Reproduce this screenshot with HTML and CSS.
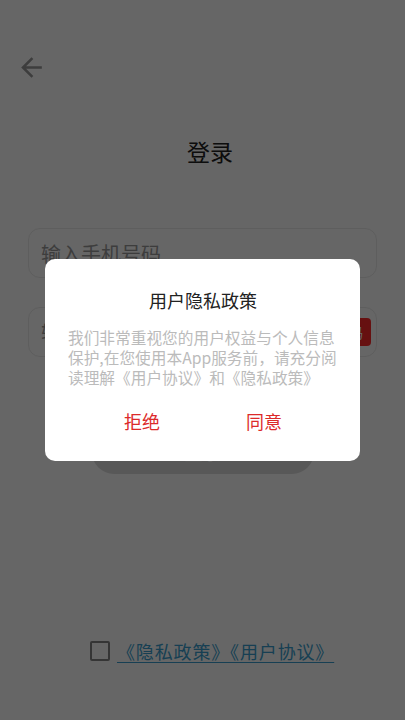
FILE: index.html
```html
<!DOCTYPE html>
<html lang="zh-CN">
<head>
  <meta charset="utf-8">
  <meta name="viewport" content="width=device-width, initial-scale=1">
  <title>登录</title>
  <link rel="stylesheet" href="styles.css">
</head>
<body>
  <div class="page">
    <div class="topbar">
      <svg class="back" viewBox="0 0 24 24" aria-label="返回"><path d="M20 11H7.83l5.59-5.59L12 4l-8 8 8 8 1.41-1.41L7.83 13H20v-2z"/></svg>
    </div>
    <div class="title">登录</div>
    <div class="form">
      <div class="field"><input type="tel" placeholder="输入手机号码"></div>
      <div class="field"><input type="text" placeholder="输入验证码"><button class="code-btn">获取验证码</button></div>
      <button class="login-btn">登录</button>
    </div>
    <div class="agree">
      <span class="check"></span>
      <a class="links" href="#">《隐私政策》《用户协议》</a>
    </div>
  </div>

  <!-- 隐私弹窗 -->
  <div class="mask">
    <div class="dialog" role="dialog" aria-label="用户隐私政策">
      <div class="dialog-title">用户隐私政策</div>
      <div class="dialog-text">我们非常重视您的用户权益与个人信息保护,在您使用本App服务前，请充分阅读理解《用户协议》和《隐私政策》</div>
      <div class="dialog-actions">
        <button class="action">拒绝</button>
        <button class="action">同意</button>
      </div>
    </div>
  </div>
</body>
</html>
```

FILE: styles.css
```css
:root {
  --text-primary: #222;
  --text-muted: #999;
  --accent: #ff2a2a;
  --link: #3a9fd0;
  --border-light: #ebebeb;
}
*, *::before, *::after {
  box-sizing: border-box;
  margin: 0;
  padding: 0;
}
html, body {
  width: 100%;
  height: 100%;
  background: #fff;
  font-family: "Noto Sans CJK SC", "Noto Sans", sans-serif;
}
.page {
  display: flex;
  flex-direction: column;
  min-height: 720px;
}
.topbar {
  height: 83px;
  padding: 52px 0 0 16px;
}
.back {
  display: block;
  width: 31px;
  height: 31px;
  fill: var(--text-muted);
}
.title {
  margin-top: 52px;
  padding-left: 15px;
  text-align: center;
  font-size: 23px;
  line-height: 32px;
  color: var(--text-primary);
}
.form {
  margin-top: 61px;
  padding: 0 28px;
  display: flex;
  flex-direction: column;
  gap: 29px;
}
.field {
  display: flex;
  align-items: center;
  height: 50px;
  padding: 0 5px 0 12px;
  border: 1px solid var(--border-light);
  border-radius: 12px;
}
.field input {
  flex: 1;
  min-width: 0;
  border: none;
  outline: none;
  background: transparent;
  font: inherit;
  font-size: 20px;
  color: var(--text-primary);
}
.field input::placeholder {
  color: var(--text-muted);
}
.code-btn {
  height: 28px;
  padding: 0 8px;
  border: none;
  border-radius: 4px;
  background: var(--accent);
  color: #fff;
  font: inherit;
  font-size: 14px;
}
.login-btn {
  align-self: center;
  width: 222px;
  height: 44px;
  margin-top: 44px;
  border: none;
  border-radius: 22px;
  background: #ddd;
  color: #fff;
  font: inherit;
  font-size: 18px;
}
.agree {
  margin-top: auto;
  padding: 0 0 57px 90px;
  display: flex;
  align-items: center;
  gap: 7px;
}
.check {
  width: 20px;
  height: 20px;
  border: 2px solid #858585;
  border-radius: 2px;
}
.links {
  font-size: 18px;
  line-height: 24px;
  letter-spacing: 0.85px;
  color: var(--link);
  text-decoration: underline;
  text-underline-offset: 3px;
}
/* 弹窗 */
.mask {
  position: fixed;
  inset: 0;
  display: flex;
  align-items: center;
  justify-content: center;
  background: rgba(0,0,0,0.6);
}
.dialog {
  width: 315px;
  height: 202px;
  padding: 28px 22px 0 23px;
  background: #fff;
  border-radius: 10px;
}
.dialog-title {
  text-align: center;
  font-size: 18px;
  line-height: 26px;
  color: var(--text-primary);
}
.dialog-text {
  margin-top: 15px;
  font-size: 15.7px;
  line-height: 20px;
  color: #bbb;
}
.dialog-actions {
  margin-top: 20px;
  display: flex;
  justify-content: center;
  gap: 86px;
}
.action {
  border: none;
  background: none;
  font: inherit;
  font-size: 18px;
  line-height: 26px;
  color: #dc2a2a;
}
```
